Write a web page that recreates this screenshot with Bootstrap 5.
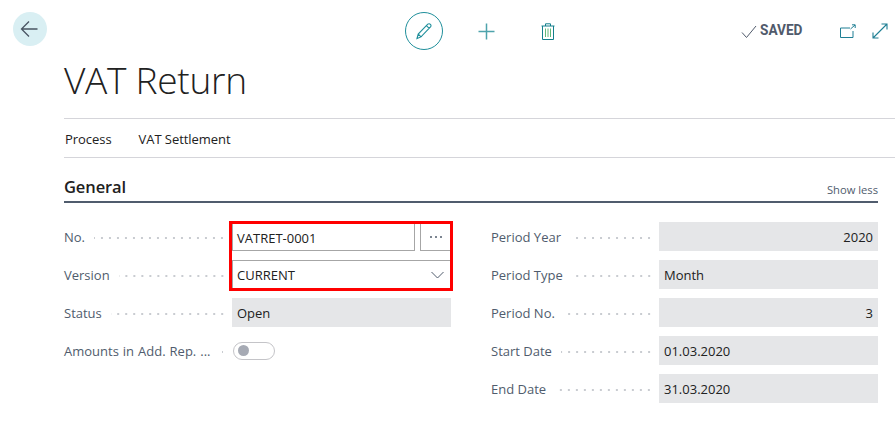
<!DOCTYPE html>
<html lang="en">
<head>
<meta charset="utf-8">
<title>VAT Return</title>
<link rel="stylesheet" href="https://cdn.jsdelivr.net/npm/bootstrap@5.3.0/dist/css/bootstrap.min.css">
<style>
html,body{height:442px;overflow:hidden;background:#fff}
body{font-family:"Open Sans","Noto Sans",sans-serif;font-size:13px;color:#212121;letter-spacing:0}
.topbar{height:58px;padding:0 7px 0 13px}
.backbtn{width:34px;height:34px;border-radius:50%;background:#d9eff3;margin-top:12px}
.actions{position:absolute;left:405px;top:12px;gap:24px}
.editbtn{width:38px;height:38px;border:1px solid #1f8f9b;border-radius:50%}
.iconbox{width:38px;height:38px}
.savedtxt{font-family:Roboto,sans-serif;font-weight:700;font-size:14.5px;color:#505a6b;letter-spacing:0;line-height:1;margin:1px 0 0 3px;transform:scaleX(.94);transform-origin:left center;width:42px}
.statusbar{margin-top:23px}
.chk{margin-top:2px}
.openico{margin:1px 0 0 38px}
.growico{margin-left:16px}
.titletxt{font-family:"Open Sans",sans-serif;font-weight:300;font-size:37.1px;line-height:44px;margin:0 0 0 64px;color:#212121;letter-spacing:-.3px;height:60px}
.tabbar{margin-left:64px;border-top:1px solid #d5d5da;border-bottom:1px solid #d5d5da;height:40px;padding:3px 0 0 1px;gap:27px;font-size:13px;color:#212121;letter-spacing:-.05px}
.sect{margin:0 17px 0 64px}
.secthead{height:45px;border-bottom:2px solid #505c6d;padding-bottom:3px}
.secttitle{font-weight:600;font-size:16.5px;color:#212121;line-height:22px;margin:0;letter-spacing:-.1px}
.lesslink{font-size:11.2px;color:#505c6d;line-height:14px;margin-bottom:1px}
.formcols{margin-top:19px;gap:40px}
.formcol{width:387px;gap:9px}
.frow{height:29px}
.flabel{width:168px;color:#505c6d;padding:2px 6px 0 0;white-space:nowrap}
.widelabel{word-spacing:.6px}
.dots{flex:1;height:2px;margin:1px 0 0 9px;background:radial-gradient(circle,#c9ccd1 0.9px,transparent 1.1px) right center/8px 2px repeat-x}
.fvalue{flex:1;height:29px;background:#e5e6e8;padding:0 5px;line-height:31px}
.fvalue.num{text-align:right}
.editrow{height:29px;border:1px solid #a6a6a6;padding:1px 6px 0 4px;line-height:28px;background:#fff}
.ellips{width:31px;margin-left:5px;padding:0;border:1px solid #a6a6a6;background:#fff;gap:3px}
.pip{width:2px;height:2px;border-radius:50%;background:#505c6d}
.editwrap{position:relative;flex:1}
.redframe{position:absolute;left:-3px;top:-1px;right:-2px;height:70px;border:3px solid #f00;pointer-events:none}
.toggler{width:42px;height:18px;margin-left:1px;border:1px solid #c4c4c8;border-radius:9px;background:#fff;padding-left:4px}
.knob{width:11px;height:11px;border-radius:50%;background:#a6aab4}
</style>
</head>
<body>
<div class="topbar d-flex justify-content-between position-relative">
  <div class="backbtn d-flex align-items-center justify-content-center">
    <svg width="20" height="18" viewBox="0 0 20 18" fill="none" stroke="#4a5563" stroke-width="1.3"><path d="M1.5 9H17.5M9 1.5L1.5 9L9 16.5"/></svg>
  </div>
  <div class="actions d-flex align-items-center">
    <div class="editbtn d-flex align-items-center justify-content-center">
      <svg width="18" height="18" viewBox="0 0 18 18" fill="none" stroke="#1f8f9b" stroke-width="1.1"><path d="M2 16.5L3.2 12L12.8 2.2C13.5 1.5 14.6 1.5 15.4 2.3C16.2 3.1 16.2 4.2 15.5 4.9L6 14.9ZM3.2 12L6 14.9M11.4 3.6L14.2 6.4"/></svg>
    </div>
    <div class="iconbox d-flex align-items-center justify-content-center">
      <svg width="17" height="17" viewBox="0 0 17 17" fill="none" stroke="#4ea3ac" stroke-width="1.5"><path d="M8.5 .5V16.5M.5 8.5H16.5"/></svg>
    </div>
    <div class="iconbox d-flex align-items-center justify-content-center">
      <svg width="14" height="17" viewBox="0 0 14 17" fill="none" stroke="#137f8c" stroke-width="1"><path d="M.5 3H13.5M4.5 3V.8H9.5V3M1.5 3V16.5H12.5V3"/><path stroke="#62b878" d="M4.5 5.5V14M7 5.5V14M9.5 5.5V14"/></svg>
    </div>
  </div>
  <div class="d-flex align-items-start statusbar">
    <svg class="chk" width="16" height="14" viewBox="0 0 16 14" fill="none" stroke="#505a6b" stroke-width="1"><path d="M1 7.5L5.5 12.500L15 1"/></svg>
    <span class="savedtxt">SAVED</span>
    <svg class="openico" width="16" height="14" viewBox="0 0 16 14" fill="none" stroke="#1f7f94" stroke-width="1"><path d="M10 4H.5V13.5H13V7M10.5 5L15 1M12 .8H15.2V4"/></svg>
    <svg class="growico" width="16" height="16" viewBox="0 0 16 16" fill="none" stroke="#1f7f94" stroke-width="1.1"><path d="M1 15L15 1M9.5 1H15V6.5M1 9.5V15H6.5"/></svg>
  </div>
</div>
<h1 class="titletxt">VAT Return</h1>
<div class="tabbar d-flex align-items-center"><span>Process</span><span>VAT Settlement</span></div>
<div class="sect">
  <div class="secthead d-flex justify-content-between align-items-end">
    <h2 class="secttitle">General</h2>
    <span class="lesslink">Show less</span>
  </div>
  <div class="formcols d-flex">
    <div class="formcol d-flex flex-column">
      <div class="frow d-flex align-items-center">
        <div class="flabel d-flex align-items-center"><span>No.</span><span class="dots"></span></div>
        <div class="editwrap d-flex flex-column">
          <div class="d-flex">
            <div class="editrow flex-grow-1">VATRET-0001</div>
            <div class="editrow ellips d-flex justify-content-center align-items-center"><span class="pip"></span><span class="pip"></span><span class="pip"></span></div>
          </div>
          <div class="redframe"></div>
        </div>
      </div>
      <div class="frow d-flex align-items-center">
        <div class="flabel d-flex align-items-center"><span>Version</span><span class="dots"></span></div>
        <div class="editrow flex-grow-1 d-flex justify-content-between align-items-center">
          <span>CURRENT</span>
          <svg width="13" height="8" viewBox="0 0 13 8" fill="none" stroke="#505c6d" stroke-width="1"><path d="M.5 1L6.5 7L12.5 1"/></svg>
        </div>
      </div>
      <div class="frow d-flex align-items-center">
        <div class="flabel d-flex align-items-center"><span>Status</span><span class="dots"></span></div>
        <div class="fvalue">Open</div>
      </div>
      <div class="frow d-flex align-items-center">
        <div class="flabel d-flex align-items-center"><span class="widelabel">Amounts in Add. Rep. ...</span><span class="dots"></span></div>
        <div class="toggler d-flex align-items-center"><span class="knob"></span></div>
      </div>
    </div>
    <div class="formcol d-flex flex-column">
      <div class="frow d-flex align-items-center"><div class="flabel d-flex align-items-center"><span>Period Year</span><span class="dots"></span></div><div class="fvalue num">2020</div></div>
      <div class="frow d-flex align-items-center"><div class="flabel d-flex align-items-center"><span>Period Type</span><span class="dots"></span></div><div class="fvalue">Month</div></div>
      <div class="frow d-flex align-items-center"><div class="flabel d-flex align-items-center"><span>Period No.</span><span class="dots"></span></div><div class="fvalue num">3</div></div>
      <div class="frow d-flex align-items-center"><div class="flabel d-flex align-items-center"><span>Start Date</span><span class="dots"></span></div><div class="fvalue">01.03.2020</div></div>
      <div class="frow d-flex align-items-center"><div class="flabel d-flex align-items-center"><span>End Date</span><span class="dots"></span></div><div class="fvalue">31.03.2020</div></div>
    </div>
  </div>
</div>
<script src="https://cdn.jsdelivr.net/npm/bootstrap@5.3.0/dist/js/bootstrap.bundle.min.js"></script>
</body>
</html>
